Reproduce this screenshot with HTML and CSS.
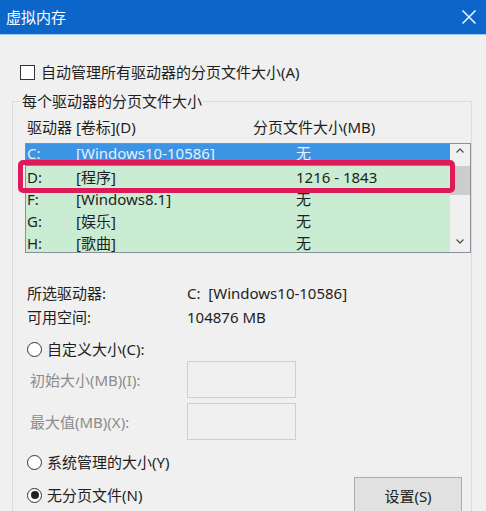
FILE: index.html
```html
<!DOCTYPE html>
<html lang="zh-CN">
<head>
    <meta charset="UTF-8">
    <title>虚拟内存</title>
    <link rel="stylesheet" href="styles.css">
</head>
<body>
    <div class="window">
        <div class="titlebar">
            <span class="title">虚拟内存</span>
            <svg class="close" width="16" height="16" viewBox="0 0 16 16">
                <path d="M1.5 1.5 L14.5 14.5 M14.5 1.5 L1.5 14.5" stroke="#e6f3ff" stroke-width="1.6" fill="none"/>
            </svg>
        </div>

        <div class="content">
            <div class="check-row">
                <span class="checkbox"></span>
                <span>自动管理所有驱动器的分页文件大小(A)</span>
            </div>

            <fieldset class="group">
                <legend>每个驱动器的分页文件大小</legend>

                <div class="list-head">
                    <span class="head-drive">驱动器 [卷标](D)</span>
                    <span>分页文件大小(MB)</span>
                </div>

                <div class="listbox">
                    <div class="rows">
                        <div class="row selected">
                            <span class="c-letter">C:</span><span class="c-label">[Windows10-10586]</span><span>无</span>
                        </div>
                        <div class="row">
                            <span class="c-letter">D:</span><span class="c-label">[程序]</span><span>1216 - 1843</span>
                        </div>
                        <div class="row">
                            <span class="c-letter">F:</span><span class="c-label">[Windows8.1]</span><span>无</span>
                        </div>
                        <div class="row">
                            <span class="c-letter">G:</span><span class="c-label">[娱乐]</span><span>无</span>
                        </div>
                        <div class="row">
                            <span class="c-letter">H:</span><span class="c-label">[歌曲]</span><span>无</span>
                        </div>
                    </div>
                    <div class="scrollbar">
                        <svg class="arrow" width="20" height="22" viewBox="0 0 20 22">
                            <path d="M6.5 8.5 L10 5 L13.5 8.5" stroke="#555" stroke-width="1.3" fill="none"/>
                        </svg>
                        <div class="thumb"></div>
                        <div class="track"></div>
                        <svg class="arrow" width="20" height="22" viewBox="0 0 20 22">
                            <path d="M6.5 9.5 L10 13 L13.5 9.5" stroke="#555" stroke-width="1.3" fill="none"/>
                        </svg>
                    </div>
                    <div class="mark"></div>
                </div>

                <div class="info">
                    <span>所选驱动器:</span><span>C:&nbsp;&nbsp;[Windows10-10586]</span>
                    <span>可用空间:</span><span>104876 MB</span>
                </div>

                <div class="radio-row custom">
                    <span class="radio"></span>
                    <span>自定义大小(C):</span>
                </div>

                <div class="field-row">
                    <span class="field-label">初始大小(MB)(I):</span>
                    <span class="field-box"></span>
                </div>
                <div class="field-row">
                    <span class="field-label">最大值(MB)(X):</span>
                    <span class="field-box"></span>
                </div>

                <div class="radio-row system">
                    <span class="radio"></span>
                    <span>系统管理的大小(Y)</span>
                </div>

                <div class="last-row">
                    <div class="radio-row">
                        <span class="radio checked"></span>
                        <span>无分页文件(N)</span>
                    </div>
                    <button class="btn">设置(S)</button>
                </div>
            </fieldset>
        </div>
    </div>
</body>
</html>
```

FILE: styles.css
```css
* {
    margin: 0;
    padding: 0;
    box-sizing: border-box;
}

body {
    font-family: 'Noto Sans', 'Noto Sans CJK SC', sans-serif;
    font-size: 15px;
    color: #1e1e1e;
    background: #f0f0f0;
    width: 486px;
    height: 511px;
    overflow: hidden;
}

.titlebar {
    height: 35px;
    background: #0c66c9;
    border-bottom: 1px solid #9cc8ee;
    display: flex;
    justify-content: space-between;
    align-items: center;
    padding: 0 9px 1px 6px;
}

.title {
    color: #fff;
    font-size: 15px;
    line-height: 20px;
}

.close {
    display: block;
}

.content {
    padding-top: 27px;
}

.check-row {
    display: flex;
    align-items: center;
    gap: 6px;
    margin-left: 20px;
    height: 20px;
    line-height: 20px;
}

.checkbox {
    width: 15px;
    height: 15px;
    border: 1px solid #333;
    background: #fff;
}

/* Group box */
.group {
    margin: 10px 0 0 12px;
    width: 460px;
    border: 1px solid #dcdcdc;
    padding: 7px 0 60px 14px;
}

.group legend {
    margin-left: -6px;
    padding: 0 1px;
    line-height: 18px;
}

.list-head {
    display: flex;
    height: 20px;
    line-height: 20px;
}

.head-drive {
    width: 226px;
}

.listbox {
    position: relative;
    margin: 6px 0 0 -2px;
    height: 110px;
    border: 1px solid #8a9099;
    display: flex;
}

.rows {
    flex: 1;
    overflow: hidden;
    background: #c9ecd2;
}

.row {
    display: flex;
    height: 22px;
    line-height: 22px;
    padding-left: 1px;
}

.row.selected {
    background: #3d94e4;
    color: #e4f1fd;
    line-height: 18px;
}

.c-letter {
    width: 49px;
}

.c-label {
    width: 220px;
}

.scrollbar {
    width: 20px;
    background: #f0f0f0;
    display: flex;
    flex-direction: column;
}

.arrow {
    display: block;
}

.thumb {
    height: 29px;
    background: #cdcdcd;
}

.track {
    flex: 1;
}

/* Red annotation frame over the D: row */
.mark {
    position: absolute;
    left: -8px;
    top: 16px;
    width: 437px;
    height: 33px;
    border: 5px solid #e0195a;
    border-radius: 5px;
}

.info {
    display: grid;
    grid-template-columns: 160px 1fr;
    line-height: 24px;
    margin-top: 28px;
}

.radio-row {
    display: flex;
    align-items: center;
    gap: 5px;
    height: 23px;
    line-height: 23px;
}

.radio-row.custom {
    margin-top: 9px;
}

.radio-row.system {
    margin-top: 10px;
    height: 24px;
}

.radio {
    width: 15px;
    height: 15px;
    border: 1px solid #333;
    border-radius: 50%;
    background: #fff;
    display: flex;
    align-items: center;
    justify-content: center;
}

.radio.checked::after {
    content: "";
    width: 8px;
    height: 8px;
    border-radius: 50%;
    background: #222;
}

.field-row {
    display: flex;
    align-items: center;
    height: 37px;
    margin-bottom: 5px;
}

.field-row:last-of-type {
    margin-bottom: 0;
}

.field-label {
    width: 160px;
    padding-left: 3px;
    color: #8c8c8c;
}

.field-box {
    width: 109px;
    height: 37px;
    border: 1px solid #cfcfcf;
    background: #f0f0f0;
}

.last-row {
    display: flex;
    justify-content: space-between;
    align-items: center;
    margin-top: 3px;
}

.btn {
    width: 108px;
    height: 36px;
    margin-right: 9px;
    background: #e1e1e1;
    border: 1px solid #adadad;
    font-family: inherit;
    font-size: 15px;
    color: #1e1e1e;
}
```
